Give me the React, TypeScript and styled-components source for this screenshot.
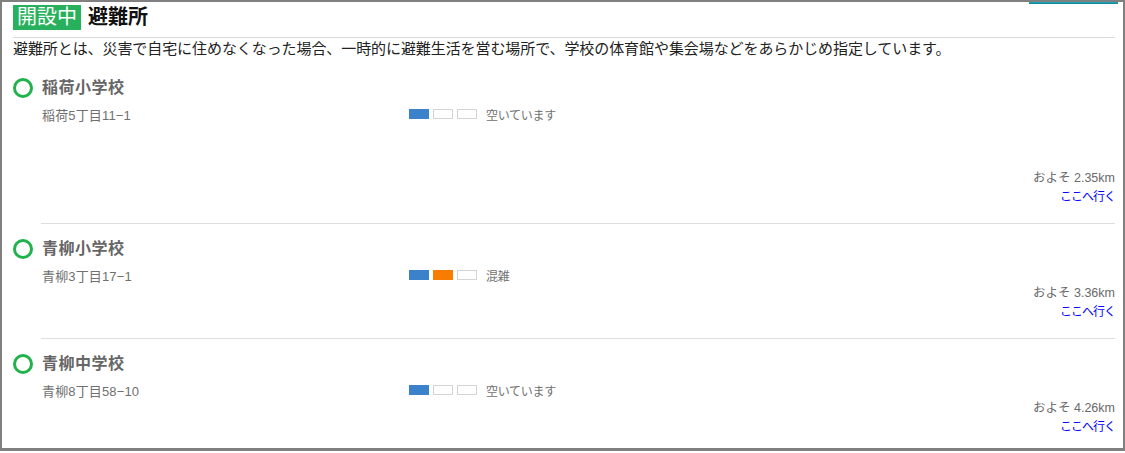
import React from 'react'
import styled, { createGlobalStyle } from 'styled-components'

const GlobalStyle = createGlobalStyle`
    body{
        margin: 0;
        background: #fff;
        font-family: "Liberation Sans", "Noto Sans CJK JP", sans-serif;
    }
`

const Frame = styled.div`
    position: relative;
    width: 1125px;
    height: 451px;
    box-sizing: border-box;
    border-style: solid;
    border-color: #808080;
    border-width: 2px 2px 3px 2px;
    padding: 0 8px 0 11px;
    overflow: hidden;
`
const TopButton = styled.div`
    position: absolute;
    top: -2px;
    left: 1027px;
    width: 89px;
    height: 3px;
    background: #1aa2b4;
    border-bottom: 1px solid #13899a;
`
const Header = styled.div`
    display: flex;
    align-items: center;
    gap: 7px;
    padding: 3px 0 7px;
    border-bottom: 1px solid #dcdae2;
`
const Badge = styled.span`
    background: #27b15c;
    color: #fff;
    font-size: 20px;
    line-height: 25px;
    padding: 0 4px;
`
const Title = styled.h1`
    margin: 0;
    font-size: 20px;
    font-weight: 700;
    color: #111;
    line-height: 25px;
`
const Description = styled.p`
    margin: 1px 0 4px;
    font-size: 15px;
    line-height: 20px;
    color: #222;
    letter-spacing: -0.08px;
`
const Item = styled.div`
    display: flex;
`
const Marker = styled.div`
    width: 28px;
    flex-shrink: 0;
    padding-top: 15px;
`
const Ring = styled.div`
    width: 20px;
    height: 20px;
    box-sizing: border-box;
    border: 3px solid #22b24c;
    border-radius: 50%;
`
const Body = styled.div`
    flex: 1;
    padding: 15px 0 16px 1px;
    border-bottom: 1px solid #dedede;
`
const Name = styled.div`
    font-size: 16px;
    font-weight: 700;
    line-height: 20px;
    color: #666;
    letter-spacing: 0.5px;
`
const InfoRow = styled.div`
    display: flex;
    align-items: center;
    height: 18px;
    margin-top: 7px;
`
const Address = styled.div`
    width: 367px;
    font-size: 13px;
    color: #707070;
    letter-spacing: 0.15px;
`
const Meter = styled.div`
    display: flex;
    align-items: center;
    gap: 4px;
`
const Cell = styled.span<{ $fill?: string }>`
    width: 20px;
    height: 10px;
    box-sizing: border-box;
    background: ${p => p.$fill ?? '#fff'};
    border: ${p => (p.$fill ? 'none' : '1px solid #d4d4d4')};
`
const Status = styled.span`
    margin-left: 9px;
    font-size: 12px;
    color: #707070;
    letter-spacing: -0.3px;
`
const Distance = styled.div<{ $gap: number }>`
    margin-top: ${p => p.$gap}px;
    text-align: right;
    font-size: 12.5px;
    line-height: 18px;
    color: #6a6a6a;
`
const GoLink = styled.a`
    display: block;
    text-align: right;
    font-size: 12px;
    line-height: 20px;
    color: #0000ff;
    text-decoration: none;
    letter-spacing: -1px;
`

type Shelter = {
    name: string
    address: string
    level: number
    status: string
    km: string
    gap: number
}

const shelters: Shelter[] = [
    { name: '稲荷小学校', address: '稲荷5丁目11−1', level: 1, status: '空いています', km: '2.35', gap: 46 },
    { name: '青柳小学校', address: '青柳3丁目17−1', level: 2, status: '混雑', km: '3.36', gap: 0 },
    { name: '青柳中学校', address: '青柳8丁目58−10', level: 1, status: '空いています', km: '4.26', gap: 0 },
]

const levelColors = ['#3b82cb', '#f77c00', '#e53935']

const App = (): JSX.Element => {
    return (
        <>
            <GlobalStyle />
            <Frame>
                <TopButton />
                <Header>
                    <Badge>開設中</Badge>
                    <Title>避難所</Title>
                </Header>
                <Description>
                    避難所とは、災害で自宅に住めなくなった場合、一時的に避難生活を営む場所で、学校の体育館や集会場などをあらかじめ指定しています。
                </Description>
                {shelters.map(s => (
                    <Item key={s.name}>
                        <Marker>
                            <Ring />
                        </Marker>
                        <Body>
                            <Name>{s.name}</Name>
                            <InfoRow>
                                <Address>{s.address}</Address>
                                <Meter>
                                    {[0, 1, 2].map(i => (
                                        <Cell key={i} $fill={i < s.level ? levelColors[i] : undefined} />
                                    ))}
                                </Meter>
                                <Status>{s.status}</Status>
                            </InfoRow>
                            <Distance $gap={s.gap}>およそ {s.km}km</Distance>
                            <GoLink href="#">ここへ行く</GoLink>
                        </Body>
                    </Item>
                ))}
            </Frame>
        </>
    )
}

export default App
